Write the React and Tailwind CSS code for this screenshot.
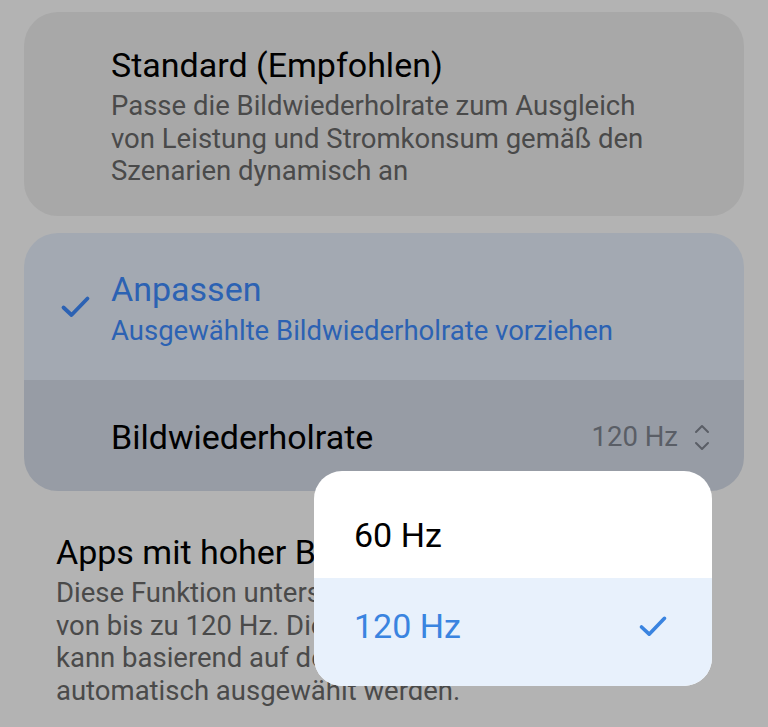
import { ChevronUp, ChevronDown } from 'lucide-react'

function Check({ className }) {
  return (
    <svg viewBox="0 0 30 24" className={className} fill="none" stroke="currentColor" strokeWidth="3.8" strokeLinecap="round" strokeLinejoin="round">
      <path d="M3 12.5 L11 20 L27 3.5" />
    </svg>
  )
}

export default function App() {
  return (
    <div className="w-[768px] h-[727px] overflow-hidden bg-[#b3b3b3] relative" style={{ fontFamily: 'Roboto, "Noto Sans", sans-serif' }}>
      <div className="px-6 pt-3">
        {/* Standard */}
        <div className="bg-[#a8a8a8] rounded-[34px] pl-[87px] pr-4 pt-[33px] h-[204px]">
          <div className="text-[34px] leading-[40px] text-black">Standard (Empfohlen)</div>
          <p className="text-[27.5px] leading-[32.5px] text-[#4a4a4a] mt-[5px]">
            Passe die Bildwiederholrate zum Ausgleich<br />
            von Leistung und Stromkonsum gemäß den<br />
            Szenarien dynamisch an
          </p>
        </div>

        {/* Anpassen */}
        <div className="mt-[17px] rounded-[34px] overflow-hidden">
          <div className="bg-[#a3a9b2] h-[147px] flex items-start pt-[36px]">
            <div className="w-[87px] flex justify-center pl-[15px] pt-[26px]">
              <Check className="w-[31px] h-[24px] text-[#2c62b3]" />
            </div>
            <div>
              <div className="text-[34px] leading-[40px] text-[#2c62b3]">Anpassen</div>
              <div className="text-[27.5px] leading-[32.5px] text-[#2c62b3] mt-[6px]">Ausgewählte Bildwiederholrate vorziehen</div>
            </div>
          </div>
          <div className="bg-[#979ca5] h-[111px] flex items-center pl-[87px] pr-[30px] pt-[3px]">
            <div className="text-[34px] leading-[40px] text-black flex-1">Bildwiederholrate</div>
            <div className="text-[27.5px] text-[#5a5e66] mr-[12px]">120 Hz</div>
            <div className="flex flex-col text-[#5a5e66] -space-y-[7px]">
              <ChevronUp size={24} strokeWidth={2} />
              <ChevronDown size={24} strokeWidth={2} />
            </div>
          </div>
        </div>

        {/* Apps mit hoher Bildwiederholrate */}
        <div className="pl-8 pt-[41px]">
          <div className="text-[34px] leading-[40px] text-black">Apps mit hoher Bildwiederholrate</div>
          <p className="text-[27.5px] leading-[32.5px] text-[#4a4a4a] mt-[5px]">
            Diese Funktion unterstützt Bildwiederholraten<br />
            von bis zu 120 Hz. Die Bildwiederholrate<br />
            kann basierend auf den Apps und Szenarien<br />
            automatisch ausgewählt werden.
          </p>
        </div>
      </div>

      {/* Popup */}
      <div className="absolute left-[314px] top-[471px] w-[398px] rounded-[28px] overflow-hidden bg-white">
        <div className="h-[107px] flex items-center pl-[40px] pt-[20px]">
          <span className="text-[34px] leading-[40px] text-black">60 Hz</span>
        </div>
        <div className="h-[108px] bg-[#e8f1fc] flex items-center justify-between pl-[40px] pr-[44px] pb-[12px]">
          <span className="text-[34px] leading-[40px] text-[#3a84e0]">120 Hz</span>
          <Check className="w-[30px] h-[23px] text-[#3a84e0]" />
        </div>
      </div>
    </div>
  )
}
